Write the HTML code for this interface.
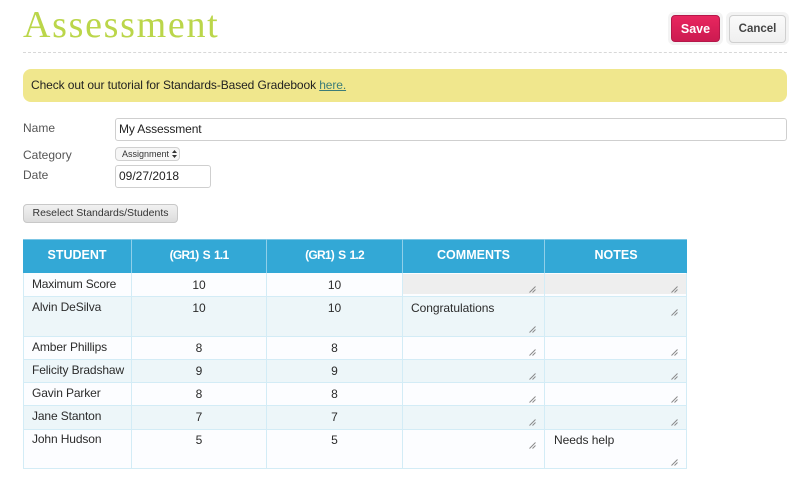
<!DOCTYPE html>
<html><head><meta charset="utf-8"><style>
html,body{margin:0;padding:0;background:#fff;width:809px;height:482px;overflow:hidden}
body{position:relative;font-family:"Liberation Sans",sans-serif;color:#2b2b2b;font-size:12px;filter:blur(.25px)}
.a{position:absolute;white-space:nowrap}
.t{position:absolute;white-space:nowrap;line-height:14px}
.n{letter-spacing:-.12px}
.box{position:absolute;box-sizing:border-box}
.h{position:absolute;top:239px;height:34px;line-height:33px;text-align:center;color:#fff;font-weight:bold;font-size:12.5px;background:#33a8d6;box-sizing:border-box}
.gr{font-size:12px;letter-spacing:-.75px;word-spacing:1.5px}
.r{position:absolute;left:24px;width:662px;box-sizing:border-box}
.v{position:absolute;top:273px;width:1px;height:196px;background:#d3ecf6}
.hl{position:absolute;left:23px;width:664px;height:1px;background:#d3ecf6}
.c{position:absolute;text-align:center;line-height:14px}
svg.g{position:absolute;width:7px;height:7px}
</style></head><body>
<div class="t" style="left:23px;top:3px;font-family:'Liberation Serif',serif;font-size:38px;line-height:44px;color:#bbd64a;letter-spacing:1.7px">Assessment</div>
<div class="box" style="left:23px;top:52px;width:764px;border-top:1px dashed #d8d8d8"></div>

<div class="box" style="left:668px;top:12px;width:55px;height:33px;background:#f3f3f3;border-radius:6px"></div>
<div class="box" style="left:671px;top:15px;width:49px;height:27px;background:linear-gradient(#e8265f,#cc1a50);border:1px solid #b5174a;border-radius:4px;color:#fff;font-weight:bold;text-align:center;line-height:26px;font-size:12.5px">Save</div>
<div class="box" style="left:726px;top:12px;width:63px;height:33px;background:#f3f3f3;border-radius:6px"></div>
<div class="box" style="left:729px;top:15px;width:57px;height:28px;background:linear-gradient(#fafafa,#efefef);border:1px solid #cfcfcf;border-radius:4px;color:#444;font-weight:bold;text-align:center;line-height:27px;font-size:11.5px">Cancel</div>

<div class="box" style="left:23px;top:69px;width:764px;height:33px;background:#f0e78d;border-radius:8px"></div>
<div class="t" style="left:31px;top:78px;font-size:12px;letter-spacing:-.1px;color:#222">Check out our tutorial for Standards-Based Gradebook <span style="color:#3c7d78;text-decoration:underline">here.</span></div>

<div class="t" style="left:23px;top:121px;color:#555">Name</div>
<div class="box" style="left:115px;top:118px;width:672px;height:23px;border:1px solid #cfcfcf;border-radius:3px;background:#fff"></div>
<div class="t n" style="left:119px;top:122px;font-size:12px;color:#222">My Assessment</div>
<div class="t" style="left:23px;top:148px;color:#555">Category</div>
<div class="box" style="left:115px;top:147px;width:65px;height:14px;border:1px solid #d0d0d0;border-radius:4px;background:#f6f6f6"></div>
<div class="t" style="left:122px;top:147px;font-size:9px;color:#333">Assignment</div>
<svg style="position:absolute;left:172px;top:150px" width="5" height="8"><path d="M2.5 0L5 3H0zM2.5 8L0 5h5z" fill="#333"/></svg>
<div class="t" style="left:23px;top:168px;color:#555">Date</div>
<div class="box" style="left:115px;top:165px;width:96px;height:23px;border:1px solid #cfcfcf;border-radius:3px;background:#fff"></div>
<div class="t" style="left:119px;top:169px;font-size:12px;color:#222">09/27/2018</div>
<div class="box" style="left:23px;top:204px;width:155px;height:19px;border:1px solid #c8c8c8;border-radius:4px;background:linear-gradient(#f1f1f1,#dcdcdc);text-align:center;line-height:17px;font-size:10.5px;color:#333">Reselect Standards/Students</div>

<!-- table header -->
<div class="h" style="left:23px;width:108px">STUDENT</div>
<div class="h gr" style="left:132px;width:134px">(GR1) S 1.1</div>
<div class="h gr" style="left:267px;width:135px">(GR1) S 1.2</div>
<div class="h" style="left:403px;width:141px">COMMENTS</div>
<div class="h" style="left:545px;width:142px">NOTES</div>
<div class="box" style="left:23px;top:239px;width:664px;height:1px;background:#7cc6e5"></div>

<!-- rows -->
<div class="r" style="top:273px;height:24px;background:#fcfdff"></div>
<div class="r" style="top:297px;height:40px;background:#edf6f9"></div>
<div class="r" style="top:337px;height:23px;background:#fcfdff"></div>
<div class="r" style="top:360px;height:23px;background:#edf6f9"></div>
<div class="r" style="top:383px;height:23px;background:#fcfdff"></div>
<div class="r" style="top:406px;height:24px;background:#edf6f9"></div>
<div class="r" style="top:430px;height:38px;background:#fcfdff"></div>
<div class="box" style="left:403px;top:274px;width:283px;height:20px;background:#eeeeee"></div>

<div class="hl" style="top:296px"></div>
<div class="hl" style="top:336px"></div>
<div class="hl" style="top:359px"></div>
<div class="hl" style="top:382px"></div>
<div class="hl" style="top:405px"></div>
<div class="hl" style="top:429px"></div>
<div class="hl" style="top:468px"></div>
<div class="v" style="left:23px"></div>
<div class="v" style="left:131px;top:239px;height:34px;background:#8fcfe9"></div>
<div class="v" style="left:266px;top:239px;height:34px;background:#8fcfe9"></div>
<div class="v" style="left:402px;top:239px;height:34px;background:#8fcfe9"></div>
<div class="v" style="left:544px;top:239px;height:34px;background:#8fcfe9"></div>
<div class="v" style="left:686px"></div>
<div class="v" style="left:131px"></div><div class="v" style="left:266px"></div><div class="v" style="left:402px"></div><div class="v" style="left:544px"></div>

<div class="t n" style="left:32px;top:277px;letter-spacing:-.2px">Maximum Score</div>
<div class="t n" style="left:32px;top:300px">Alvin DeSilva</div>
<div class="t n" style="left:32px;top:340px">Amber Phillips</div>
<div class="t n" style="left:32px;top:363px">Felicity Bradshaw</div>
<div class="t n" style="left:32px;top:386px">Gavin Parker</div>
<div class="t n" style="left:32px;top:409px">Jane Stanton</div>
<div class="t n" style="left:32px;top:432px">John Hudson</div>

<div class="c" style="left:132px;width:134px;top:278px">10</div><div class="c" style="left:267px;width:135px;top:278px">10</div>
<div class="c" style="left:132px;width:134px;top:301px">10</div><div class="c" style="left:267px;width:135px;top:301px">10</div>
<div class="c" style="left:132px;width:134px;top:341px">8</div><div class="c" style="left:267px;width:135px;top:341px">8</div>
<div class="c" style="left:132px;width:134px;top:364px">9</div><div class="c" style="left:267px;width:135px;top:364px">9</div>
<div class="c" style="left:132px;width:134px;top:387px">8</div><div class="c" style="left:267px;width:135px;top:387px">8</div>
<div class="c" style="left:132px;width:134px;top:410px">7</div><div class="c" style="left:267px;width:135px;top:410px">7</div>
<div class="c" style="left:132px;width:134px;top:433px">5</div><div class="c" style="left:267px;width:135px;top:433px">5</div>

<div class="t n" style="left:411px;top:301px;letter-spacing:-.05px">Congratulations</div>
<div class="t n" style="left:554px;top:433px;letter-spacing:-.05px">Needs help</div>

<svg width="0" height="0" style="position:absolute"><defs><g id="gr"><path d="M0.5 6.5L6.5 0.5M3.5 6.5L6.5 3.5" stroke="#8a8a8a" stroke-width="1" fill="none"/></g></defs></svg>
<svg class="g" style="left:529px;top:286px"><use href="#gr"/></svg><svg class="g" style="left:671px;top:286px"><use href="#gr"/></svg>
<svg class="g" style="left:529px;top:326px"><use href="#gr"/></svg><svg class="g" style="left:671px;top:309px"><use href="#gr"/></svg>
<svg class="g" style="left:529px;top:349px"><use href="#gr"/></svg><svg class="g" style="left:671px;top:349px"><use href="#gr"/></svg>
<svg class="g" style="left:529px;top:373px"><use href="#gr"/></svg><svg class="g" style="left:671px;top:373px"><use href="#gr"/></svg>
<svg class="g" style="left:529px;top:396px"><use href="#gr"/></svg><svg class="g" style="left:671px;top:396px"><use href="#gr"/></svg>
<svg class="g" style="left:529px;top:419px"><use href="#gr"/></svg><svg class="g" style="left:671px;top:419px"><use href="#gr"/></svg>
<svg class="g" style="left:529px;top:442px"><use href="#gr"/></svg><svg class="g" style="left:671px;top:459px"><use href="#gr"/></svg>
</body></html>
